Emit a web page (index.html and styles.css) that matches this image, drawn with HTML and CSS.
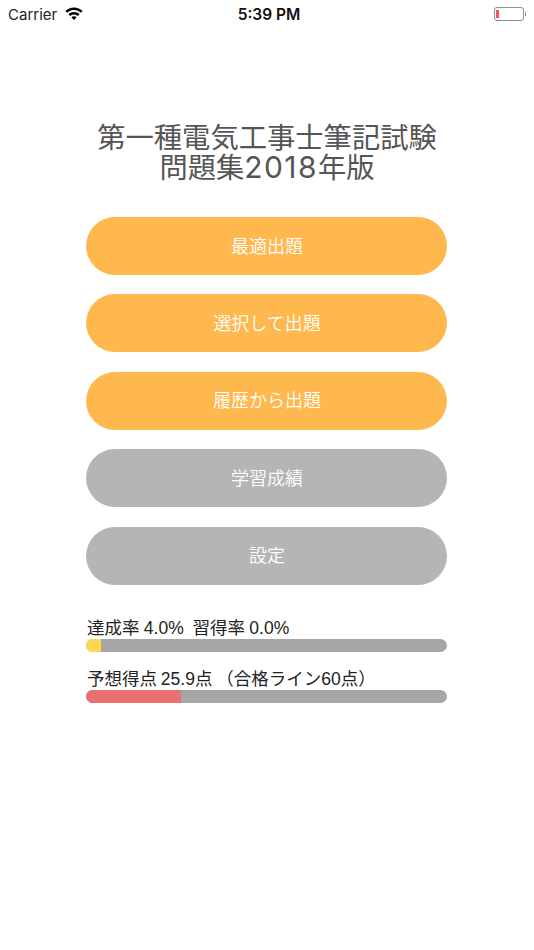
FILE: index.html
```html
<!DOCTYPE html>
<html lang="ja">
<head>
<meta charset="utf-8">
<title>第一種電気工事士筆記試験問題集2018年版</title>
<link rel="stylesheet" href="styles.css">
</head>
<body>
<header class="status">
  <div class="status-left">
    <span class="carrier">Carrier</span>
    <svg class="wifi" width="18" height="13" viewBox="0 0 18 13"><path d="M9 .5C5.700.5 2.700 1.800.4 3.900l1.700 1.800C4 4 6.400 2.900 9 2.900s5 1.100 6.900 2.800l1.700-1.800C15.300 1.800 12.300.5 9 .5zM9 4.900c-2.100 0-4.100.8-5.600 2.200l1.700 1.800C6.200 8 7.500 7.400 9 7.400s2.800.6 3.900 1.500l1.700-1.800C13.100 5.700 11.100 4.900 9 4.900zM9 9.200c-1 0-2 .4-2.700 1L9 12.900l2.700-2.700c-.7-.6-1.700-1-2.700-1z"/></svg>
  </div>
  <span class="clock">5:39 PM</span>
  <div class="battery"><span class="battery-level"></span></div>
  <span class="battery-cap"></span>
</header>
<main class="content">
  <h1 class="title">第一種電気工事士筆記試験<br>問題集<span class="digits">2018</span>年版</h1>
  <nav class="menu">
    <a class="btn btn-orange">最適出題</a>
    <a class="btn btn-orange">選択して出題</a>
    <a class="btn btn-orange">履歴から出題</a>
    <a class="btn btn-gray">学習成績</a>
    <a class="btn btn-gray">設定</a>
  </nav>
  <section class="stats">
    <div class="stat">
      <p class="label label-rate">達成率 4.0%&nbsp; 習得率 0.0%</p>
      <div class="bar"><span class="fill yellow"></span></div>
    </div>
    <div class="stat">
      <p class="label label-score">予想得点 25.9点 （合格ライン60点）</p>
      <div class="bar"><span class="fill red"></span></div>
    </div>
  </section>
</main>
</body>
</html>
```
FILE: styles.css
```css
* { box-sizing: border-box; }
html, body { margin: 0; padding: 0; }
body {
  width: 534px;
  height: 950px;
  background: #fff;
  overflow: hidden;
  font-family: Inter, "Noto Sans CJK JP", sans-serif;
}
.status {
  height: 28px;
  display: flex;
  align-items: center;
  padding: 0 8px 0 8px;
  position: relative;
  color: #000;
}
.status-left { display: flex; align-items: center; gap: 8px; }
.carrier { font-size: 15px; color: #222; }
.wifi { display: block; margin-top: -2px; }
.clock {
  position: absolute;
  left: 4px;
  right: 0;
  text-align: center;
  font-size: 15.5px;
  font-weight: 600;
  color: #111;
}
.battery {
  margin-left: auto;
  width: 30px;
  height: 14px;
  border: 1px solid #8e8e8e;
  border-radius: 3px;
  padding: 2px 1px;
  display: flex;
}
.battery-level { width: 3px; background: #f0555f; }
.battery-cap { width: 1px; height: 4px; background: #8e8e8e; margin-left: 1px; }
.content {
  padding: 96px 87px 0 86px;
}
.title {
  margin: 0;
  padding-left: 1px;
  text-align: center;
  font-weight: 400;
  font-size: 28.3px;
  line-height: 29px;
  color: #555;
  white-space: nowrap;
}
.digits {
  font-size: 30px;
  letter-spacing: 1.4px;
}
.menu {
  margin-top: 34px;
  display: flex;
  flex-direction: column;
  gap: 19.4px;
}
.btn {
  display: flex;
  align-items: center;
  justify-content: center;
  height: 58px;
  border-radius: 29px;
  padding: 0 0 3px 1px;
  color: #fff;
  font-size: 18px;
  font-weight: 350;
}
.btn-orange { background: #ffb84d; }
.btn-gray { background: #b5b5b5; }
.stats {
  margin-top: 30px;
  display: flex;
  flex-direction: column;
  gap: 14.5px;
}
.label {
  margin: 0;
  padding: 3px 0 0 1px;
  font-family: "Liberation Sans", "Noto Sans CJK JP", sans-serif;
  font-size: 17.5px;
  line-height: 21px;
  color: #222;
  white-space: nowrap;
}
.label-rate { word-spacing: -0.5px; }
.label-score { word-spacing: -1px; }
.bar {
  height: 13px;
  border-radius: 6.5px;
  background: #a6a6a6;
  overflow: hidden;
  display: flex;
}
.fill { display: block; height: 100%; }
.yellow { width: 15px; background: #ffd54f; }
.red { width: 95px; background: #e87070; }
```
